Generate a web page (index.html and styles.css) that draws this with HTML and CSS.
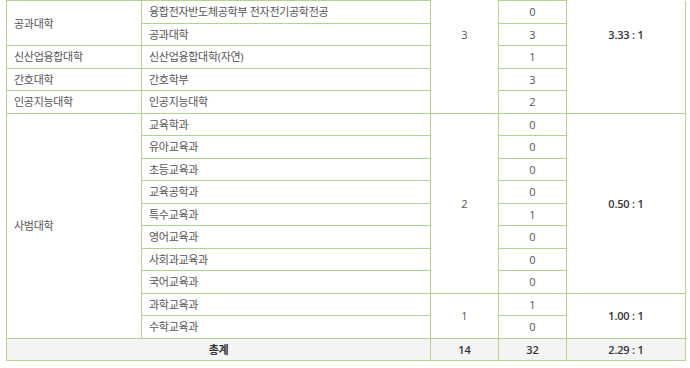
FILE: index.html
```html
<!DOCTYPE html>
<html lang="ko">
<head>
<meta charset="utf-8">
<link rel="stylesheet" href="styles.css">
</head>
<body>
<div class="wrap">
<table class="tbl">
  <colgroup>
    <col class="c1"><col class="c2"><col class="c3"><col class="c4"><col class="c5">
  </colgroup>
  <tbody>
    <tr class="first">
      <td class="ko" rowspan="2">공과대학</td>
      <td class="ko">융합전자반도체공학부 전자전기공학전공</td>
      <td class="num cont" rowspan="5">3</td>
      <td class="num">0</td>
      <td class="ratio cont" rowspan="5">3.33 : 1</td>
    </tr>
    <tr>
      <td class="ko">공과대학</td>
      <td class="num">3</td>
    </tr>
    <tr>
      <td class="ko">신산업융합대학</td>
      <td class="ko">신산업융합대학(자연)</td>
      <td class="num">1</td>
    </tr>
    <tr>
      <td class="ko">간호대학</td>
      <td class="ko">간호학부</td>
      <td class="num">3</td>
    </tr>
    <tr>
      <td class="ko">인공지능대학</td>
      <td class="ko">인공지능대학</td>
      <td class="num">2</td>
    </tr>
    <tr>
      <td class="ko" rowspan="10">사범대학</td>
      <td class="ko">교육학과</td>
      <td class="num" rowspan="8">2</td>
      <td class="num">0</td>
      <td class="ratio" rowspan="8">0.50 : 1</td>
    </tr>
    <tr><td class="ko">유아교육과</td><td class="num">0</td></tr>
    <tr><td class="ko">초등교육과</td><td class="num">0</td></tr>
    <tr><td class="ko">교육공학과</td><td class="num">0</td></tr>
    <tr><td class="ko">특수교육과</td><td class="num">1</td></tr>
    <tr><td class="ko">영어교육과</td><td class="num">0</td></tr>
    <tr><td class="ko">사회과교육과</td><td class="num">0</td></tr>
    <tr><td class="ko">국어교육과</td><td class="num">0</td></tr>
    <tr>
      <td class="ko">과학교육과</td>
      <td class="num" rowspan="2">1</td>
      <td class="num">1</td>
      <td class="ratio" rowspan="2">1.00 : 1</td>
    </tr>
    <tr><td class="ko">수학교육과</td><td class="num">0</td></tr>
    <tr class="total">
      <td class="ko sum" colspan="2">총계</td>
      <td class="num sum">14</td>
      <td class="num sum">32</td>
      <td class="ratio sum">2.29 : 1</td>
    </tr>
  </tbody>
</table>
</div>
</body>
</html>
```

FILE: styles.css
```css
html, body {
  margin: 0;
  padding: 0;
  background: #ffffff;
}

.wrap {
  padding: 0 4px 0 6px;
}

.tbl {
  width: 680px;
  border-collapse: collapse;
  table-layout: fixed;
  font-family: "Open Sans", "Noto Sans CJK KR", sans-serif;
  font-size: 11px;
  color: #555555;
  border-top: none;
}

.c1 { width: 135px; }
.c2 { width: 289px; }
.c3 { width: 68px; }
.c4 { width: 68px; }
.c5 { width: 119px; }

.tbl td {
  border: 1px solid #b5d18f;
  height: 21.5px;
  padding: 0 7px;
  line-height: 15px;
  vertical-align: middle;
  white-space: nowrap;
}

.tbl tr.first td.cont {
  border-top: none;
  vertical-align: top;
  padding-top: 26px;
}

.ko {
  letter-spacing: -0.3px;
}

.num {
  text-align: center;
}

.ratio {
  text-align: center;
  font-weight: 600;
  color: #333333;
  letter-spacing: -0.2px;
}

.total td {
  background: #f4f4f4;
}

.sum {
  text-align: center;
  font-weight: 600;
  color: #333333;
}
```
